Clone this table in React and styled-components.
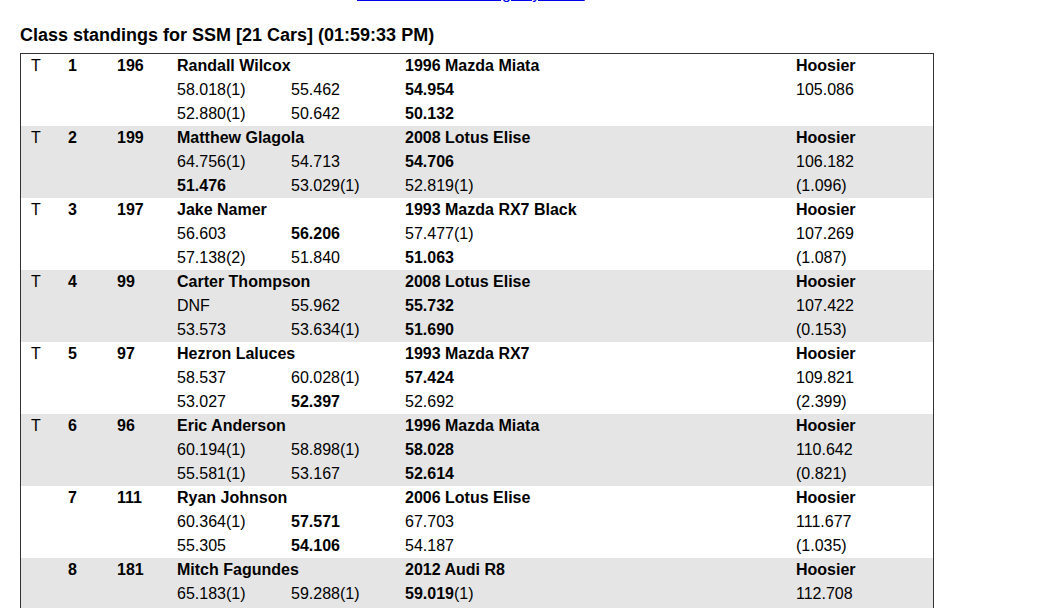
import styled, { createGlobalStyle } from "styled-components";

const GlobalStyle = createGlobalStyle`
  html, body {
    margin: 0;
    padding: 0;
    background: #ffffff;
    overflow: hidden;
  }
  body {
    font-family: "Liberation Sans", Arial, sans-serif;
    color: #000000;
  }
`;

const Page = styled.div`
  padding: 0 20px;
`;

const TopLinks = styled.div`
  margin-top: -15px;
  height: 18px;
  padding-left: 337px;
  font-size: 16px;
  line-height: 18px;
`;

const TopLink = styled.a`
  color: #0000ee;
  text-decoration: underline;
`;

const Heading = styled.h3`
  margin: 22px 0 7px;
  font-size: 18px;
  line-height: 21px;
  font-weight: bold;
`;

const Standings = styled.div`
  width: 914px;
  box-sizing: border-box;
  border: 1px solid #333333;
  border-bottom: none;
`;

const Entry = styled.div`
  background: ${(p) => (p.$shaded ? "#e5e5e5" : "#ffffff")};
`;

const Row = styled.div`
  display: grid;
  grid-template-columns: 37px 49px 60px 114px 114px 391px 1fr;
  padding-left: 10px;
  height: 24px;
  font-size: 16px;
  line-height: 24px;
  white-space: nowrap;
`;

const Cell = styled.div`
  font-weight: ${(p) => (p.$bold ? "bold" : "normal")};
  grid-column: ${(p) => p.$span || "auto"};
`;

const Best = styled.b``;

const entries = [
  {
    t: "T", pos: 1, num: 196, name: "Randall Wilcox", car: "1996 Mazda Miata", tire: "Hoosier",
    runs: [["58.018(1)", "55.462", "*54.954", "105.086"], ["52.880(1)", "50.642", "*50.132", ""]],
  },
  {
    t: "T", pos: 2, num: 199, name: "Matthew Glagola", car: "2008 Lotus Elise", tire: "Hoosier",
    runs: [["64.756(1)", "54.713", "*54.706", "106.182"], ["*51.476", "53.029(1)", "52.819(1)", "(1.096)"]],
  },
  {
    t: "T", pos: 3, num: 197, name: "Jake Namer", car: "1993 Mazda RX7 Black", tire: "Hoosier",
    runs: [["56.603", "*56.206", "57.477(1)", "107.269"], ["57.138(2)", "51.840", "*51.063", "(1.087)"]],
  },
  {
    t: "T", pos: 4, num: 99, name: "Carter Thompson", car: "2008 Lotus Elise", tire: "Hoosier",
    runs: [["DNF", "55.962", "*55.732", "107.422"], ["53.573", "53.634(1)", "*51.690", "(0.153)"]],
  },
  {
    t: "T", pos: 5, num: 97, name: "Hezron Laluces", car: "1993 Mazda RX7", tire: "Hoosier",
    runs: [["58.537", "60.028(1)", "*57.424", "109.821"], ["53.027", "*52.397", "52.692", "(2.399)"]],
  },
  {
    t: "T", pos: 6, num: 96, name: "Eric Anderson", car: "1996 Mazda Miata", tire: "Hoosier",
    runs: [["60.194(1)", "58.898(1)", "*58.028", "110.642"], ["55.581(1)", "53.167", "*52.614", "(0.821)"]],
  },
  {
    t: "", pos: 7, num: 111, name: "Ryan Johnson", car: "2006 Lotus Elise", tire: "Hoosier",
    runs: [["60.364(1)", "*57.571", "67.703", "111.677"], ["55.305", "*54.106", "54.187", "(1.035)"]],
  },
  {
    t: "", pos: 8, num: 181, name: "Mitch Fagundes", car: "2012 Audi R8", tire: "Hoosier",
    runs: [["65.183(1)", "59.288(1)", "*59.019(1)", "112.708"], ["56.204", "55.917(1)", "*54.870", "(1.031)"]],
  },
];

// "*" marks the best time; a trailing (n) cone count stays normal weight
const Time = ({ value }) => {
  if (!value.startsWith("*")) return <Cell>{value}</Cell>;
  const raw = value.slice(1);
  const m = raw.match(/^([^(]+)(\(.*\))?$/);
  return (
    <Cell>
      <Best>{m[1]}</Best>
      {m[2]}
    </Cell>
  );
};

const App = () => {
  return (
    <Page>
      <GlobalStyle />
      <TopLinks>
        <TopLink href="#">Return to all Standings by Class</TopLink>
      </TopLinks>
      <Heading>Class standings for SSM [21 Cars] (01:59:33 PM)</Heading>
      <Standings>
        {entries.map((e, i) => (
          <Entry key={e.num} $shaded={i % 2 === 1}>
            <Row>
              <Cell>{e.t}</Cell>
              <Cell $bold>{e.pos}</Cell>
              <Cell $bold>{e.num}</Cell>
              <Cell $bold $span="span 2">{e.name}</Cell>
              <Cell $bold>{e.car}</Cell>
              <Cell $bold>{e.tire}</Cell>
            </Row>
            {e.runs.map((r, j) => (
              <Row key={j}>
                <Cell />
                <Cell />
                <Cell />
                <Time value={r[0]} />
                <Time value={r[1]} />
                <Time value={r[2]} />
                <Cell>{r[3]}</Cell>
              </Row>
            ))}
          </Entry>
        ))}
      </Standings>
    </Page>
  );
};

export default App;
